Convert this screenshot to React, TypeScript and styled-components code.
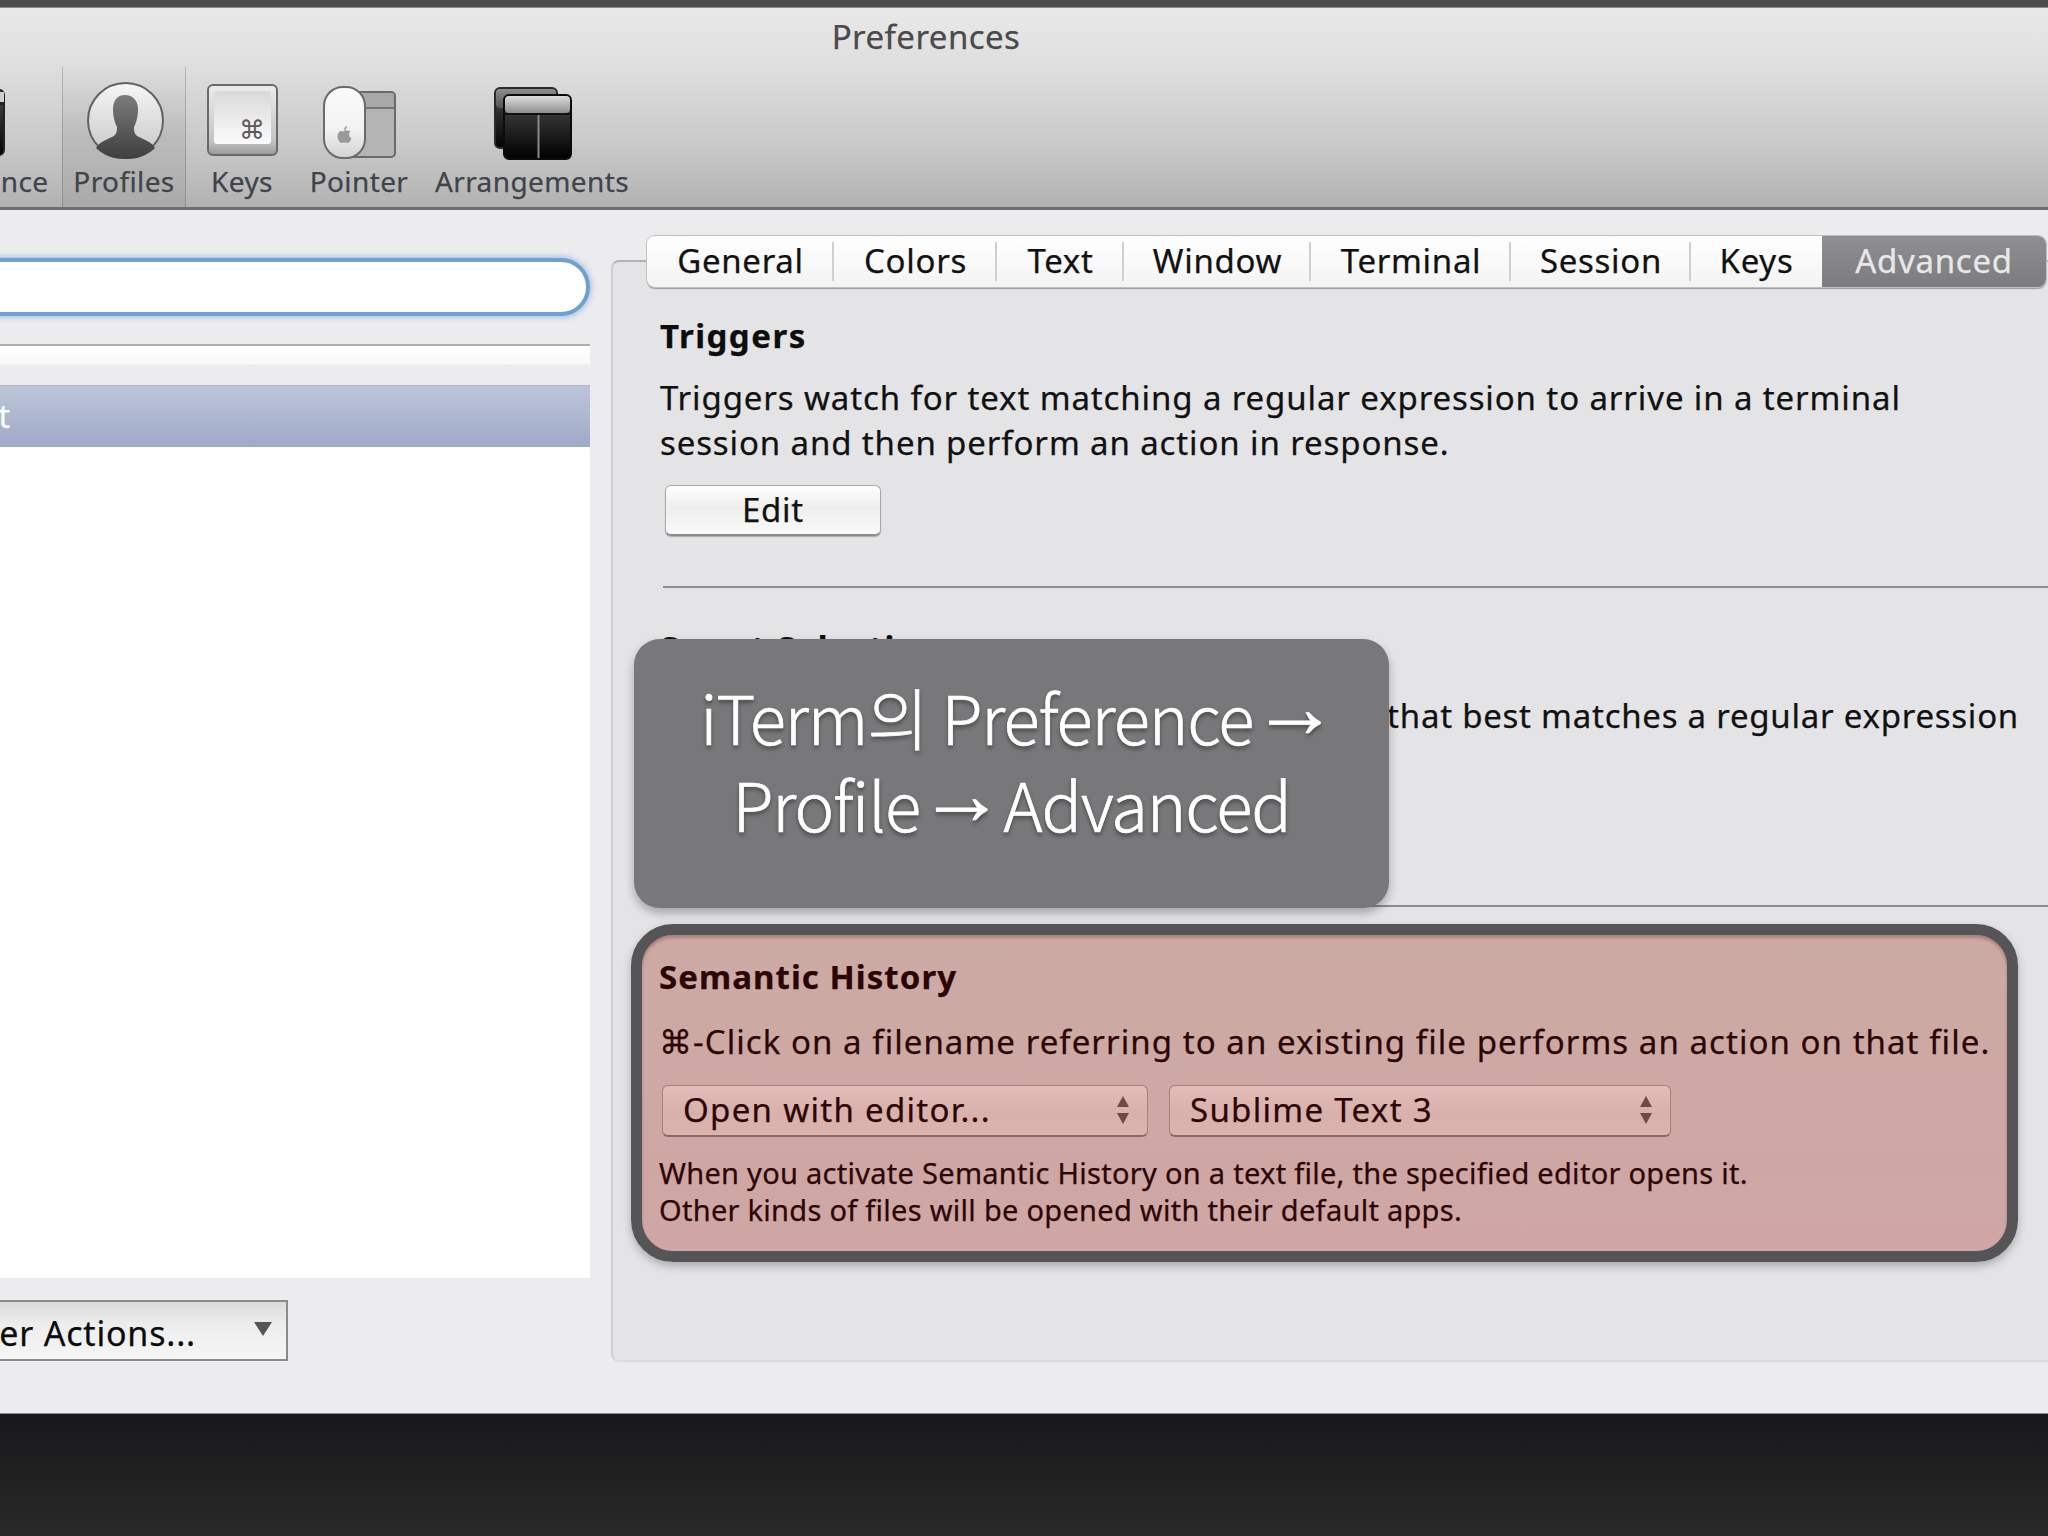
import React from 'react';
import styled, { createGlobalStyle } from 'styled-components';

const UI_FONT = '"Noto Sans", "DejaVu Sans", sans-serif';

const GlobalStyle = createGlobalStyle`
  html, body {
    margin: 0;
    padding: 0;
    background: #1f1f20;
    overflow: hidden;
  }
`;

const Page = styled.div`
  position: relative;
  width: 2048px;
  height: 1536px;
  overflow: hidden;
  display: flex;
  flex-direction: column;
  font-family: ${UI_FONT};
  -webkit-text-stroke: 0.25px currentColor;
`;

const TopStrip = styled.div`
  height: 8px;
  flex: none;
  background: #4c4c4e;
  border-bottom: 1px solid #8a8a8a;
  box-sizing: border-box;
`;

const Toolbar = styled.header`
  height: 202px;
  flex: none;
  box-sizing: border-box;
  border-bottom: 3px solid #6e6e70;
  background: linear-gradient(#e9e9e9, #dedede 30%, #c8c8c8 70%, #b2b2b2);
`;

const Title = styled.div`
  width: 1852px;
  height: 59px;
  line-height: 58px;
  text-align: center;
  font-size: 33px;
  letter-spacing: 0.45px;
  color: #4a4a4c;
`;

const ToolRow = styled.div`
  display: flex;
  height: 140px;
  margin-left: -126px;
`;

const ToolItem = styled.div<{ $w: number; $active?: boolean }>`
  width: ${(p) => p.$w}px;
  flex: none;
  box-sizing: border-box;
  padding-top: 15px;
  display: flex;
  flex-direction: column;
  align-items: center;
  ${(p) =>
    p.$active &&
    `
    background: linear-gradient(rgba(0,0,0,0), rgba(0,0,0,.08) 50%, rgba(0,0,0,.05));
    border-left: 1px solid rgba(90,90,90,.3);
    border-right: 1px solid rgba(90,90,90,.3);
  `}
`;

const ToolIcon = styled.svg`
  width: 80px;
  height: 81px;
  flex: none;
  display: block;
  overflow: visible;
`;

const ToolLabel = styled.div`
  height: 36px;
  line-height: 36px;
  white-space: nowrap;
  font-size: 28px;
  letter-spacing: 0.4px;
  color: #40444a;
`;

const Body = styled.main`
  height: 1204px;
  flex: none;
  display: flex;
  background: #ecebed;
  border-bottom: 1px solid #8c8c8c;
  box-sizing: border-box;
`;

const Sidebar = styled.aside`
  width: 611px;
  flex: none;
  box-sizing: border-box;
  padding: 48px 21px 0 0;
  overflow: hidden;
  display: flex;
  flex-direction: column;
`;

const SearchField = styled.div`
  height: 58px;
  margin-left: -40px;
  flex: none;
  box-sizing: border-box;
  border: 4px solid #6ea0d2;
  border-radius: 29px;
  background: #fff;
  box-shadow: 0 0 5px 2px rgba(120, 170, 220, 0.55);
`;

const TableHead = styled.div`
  height: 41px;
  margin-top: 28px;
  flex: none;
  box-sizing: border-box;
  border-top: 2px solid #b0aeae;
  background: linear-gradient(#fff, #f8f8f9 45%, #ecebed 50%, #ecebed);
`;

const SelectedRow = styled.div`
  height: 62px;
  flex: none;
  line-height: 60px;
  font-size: 32px;
  color: #fff;
  white-space: nowrap;
  overflow: hidden;
  background: linear-gradient(#bcc6da, #9fa8c6);
  border-top: 1px solid #b5b2ba;
  box-sizing: border-box;
`;

const RowName = styled.span`
  display: inline-block;
  margin-left: -100px;
`;

const TableBody = styled.div`
  height: 831px;
  flex: none;
  background: #fff;
`;

const ActionsRow = styled.div`
  margin-top: 22px;
  display: flex;
`;

const ActionsMenu = styled.div`
  width: 288px;
  height: 61px;
  flex: none;
  box-sizing: border-box;
  display: flex;
  align-items: center;
  justify-content: flex-end;
  gap: 58px;
  padding: 4px 14px 0 0;
  border: 2px solid #8a8a8a;
  border-left: none;
  background: linear-gradient(#dcdbdc, #eeedee 40%, #f6f5f6);
  font-size: 34px;
  letter-spacing: 0.8px;
  color: #0c0c0c;
  white-space: nowrap;
`;

const MenuCaret = styled.span`
  width: 0;
  height: 0;
  margin-bottom: 8px;
  border-left: 9px solid transparent;
  border-right: 9px solid transparent;
  border-top: 14px solid #555;
`;

const PanelArea = styled.section`
  flex: 1;
  min-width: 0;
  padding-top: 26px;
`;

const TabBar = styled.nav`
  position: relative;
  z-index: 1;
  margin-left: 36px;
  width: 1399px;
  height: 51px;
  display: flex;
  box-sizing: border-box;
  border-radius: 8px;
  overflow: hidden;
  background: linear-gradient(#fff, #f3f3f4);
  box-shadow: 0 0 0 1px #c0c0c0, 0 2px 1px #9a9a9a;
`;

const Tab = styled.div<{ $w: number; $active?: boolean; $last?: boolean }>`
  width: ${(p) => p.$w}px;
  flex: none;
  box-sizing: border-box;
  padding-bottom: 3px;
  display: flex;
  align-items: center;
  justify-content: center;
  position: relative;
  font-size: 33px;
  letter-spacing: 0.7px;
  color: ${(p) => (p.$active ? '#e8e8ea' : '#111')};
  background: ${(p) => (p.$active ? 'linear-gradient(#8f8e90, #7c7b7d)' : 'transparent')};
  ${(p) =>
    !p.$active &&
    !p.$last &&
    `
    &::after {
      content: '';
      position: absolute;
      right: 0;
      top: 6px;
      bottom: 6px;
      width: 2px;
      background: #cfcfcf;
    }
  `}
`;

const TabBox = styled.div`
  height: 1102px;
  margin-top: -27px;
  box-sizing: border-box;
  padding: 52px 0 0 47px;
  border: 2px solid #dcdbdd;
  border-top-color: #b4b3b5;
  border-left-color: #cfced0;
  border-right: none;
  border-radius: 8px 0 0 8px;
  background: #e4e3e5;
`;

const SectionTitle = styled.h2<{ $tint?: boolean }>`
  margin: 0;
  height: 44px;
  line-height: 44px;
  font-size: 33px;
  font-weight: 700;
  letter-spacing: ${(p) => (p.$tint ? '1.05px' : '1.5px')};
  color: ${(p) => (p.$tint ? '#2c0606' : '#0d0d0d')};
`;

const Paragraph = styled.p`
  margin: 18px 0 0;
  font-size: 33px;
  line-height: 44.5px;
  letter-spacing: 0.88px;
  color: #111;
  white-space: nowrap;
`;

const EditButton = styled.button`
  display: block;
  width: 216px;
  height: 51px;
  margin: 20px 0 0 5px;
  padding: 0 0 1px;
  box-sizing: border-box;
  border: 1px solid #a8a8a8;
  border-bottom: 2px solid #8c8c8c;
  border-radius: 6px;
  background: linear-gradient(#fff, #eeeeef 45%, #fafafa);
  box-shadow: 0 1px 1px rgba(0, 0, 0, 0.25);
  font-family: inherit;
  font-size: 33px;
  letter-spacing: 0.7px;
  color: #111;
`;

const Divider = styled.hr<{ $top: number }>`
  height: 2px;
  margin: ${(p) => p.$top}px 0 0 3px;
  border: none;
  background: #8e8e90;
`;

const SmartTitle = styled(SectionTitle)`
  margin-top: 38px;
`;

const SmartLine = styled.div`
  width: 1359px;
  height: 44px;
  margin-top: 24px;
  display: flex;
  justify-content: flex-end;
  line-height: 44px;
  font-size: 33px;
  letter-spacing: 0.75px;
  color: #111;
  white-space: nowrap;
`;

const SmartSecondLine = styled.div`
  height: 44px;
  line-height: 44px;
  font-size: 33px;
  color: #111;
`;

const Highlight = styled.div`
  width: 1387px;
  height: 338px;
  margin: 17px 0 0 -29px;
  box-sizing: border-box;
  padding: 20px 0 0 17px;
  border: 11px solid #555456;
  border-radius: 42px;
  background: linear-gradient(#ccaaa4, #cfa6a4);
  box-shadow: 0 4px 8px rgba(0, 0, 0, 0.25), inset 0 3px 3px rgba(120, 50, 50, 0.35);
`;

const HighlightLine = styled.p`
  margin: 21px 0 0;
  height: 44px;
  line-height: 44px;
  font-size: 33px;
  letter-spacing: 1.05px;
  color: #2c0606;
  white-space: nowrap;
`;

const SelectRow = styled.div`
  display: flex;
  gap: 21px;
  margin: 21px 0 0 3px;
`;

const Select = styled.div<{ $w: number }>`
  width: ${(p) => p.$w}px;
  height: 52px;
  flex: none;
  box-sizing: border-box;
  padding: 0 17px 2px 20px;
  display: flex;
  align-items: center;
  justify-content: space-between;
  border: 1px solid #a87f7b;
  border-bottom: 2px solid #8f6763;
  border-radius: 6px;
  background: linear-gradient(#e2bdb8, #d8b0ac 55%, #dab3ae);
  font-size: 33px;
  letter-spacing: 1.3px;
  color: #2c0606;
`;

const StepperIcon = styled.svg`
  width: 14px;
  height: 30px;
  flex: none;
`;

const Note = styled.p`
  margin: 18px 0 0;
  font-size: 29px;
  line-height: 36.5px;
  letter-spacing: 0.28px;
  color: #2c0606;
  white-space: nowrap;
`;

const Callout = styled.div`
  position: absolute;
  left: 634px;
  top: 639px;
  width: 755px;
  height: 269px;
  box-sizing: border-box;
  padding-top: 33px;
  border-radius: 26px;
  background: #787779;
  box-shadow: 0 5px 10px rgba(0, 0, 0, 0.28);
  text-align: center;
  font-family: "Noto Sans CJK KR", "Noto Sans", sans-serif;
  font-weight: 300;
  font-size: 67px;
  line-height: 87px;
  letter-spacing: -1.1px;
  color: #fff;
  -webkit-text-stroke: 0.7px #fff;
  text-shadow: 0 3px 4px rgba(0, 0, 0, 0.45);
`;

const CalloutLine = styled.div`
  height: 87px;
  white-space: nowrap;
`;

const Arrow = styled.span`
  display: inline-block;
  font-family: "Liberation Sans", sans-serif;
  font-size: 86px;
  line-height: 0;
  letter-spacing: 0;
  margin: 0 -15px;
  transform: translateY(-8px);
`;

const Desk = styled.footer`
  flex: 1;
  background: linear-gradient(#18181a, #29292a);
`;

function AppearanceIcon() {
  return (
    <ToolIcon viewBox="0 0 80 81">
      <defs>
        <linearGradient id="appBody" x1="0" y1="0" x2="0" y2="1">
          <stop offset="0" stopColor="#4a4a4a" />
          <stop offset="1" stopColor="#050505" />
        </linearGradient>
      </defs>
      <rect x="18" y="8" width="58" height="65" rx="5" fill="url(#appBody)" stroke="#222" strokeWidth="2" />
      <rect x="18" y="10" width="58" height="10" fill="#cfcfcf" />
      <rect x="18" y="20" width="58" height="3" fill="#222" />
    </ToolIcon>
  );
}

function ProfileIcon() {
  return (
    <ToolIcon viewBox="0 0 80 81">
      <defs>
        <linearGradient id="profileDisc" x1="0" y1="0" x2="0" y2="1">
          <stop offset="0" stopColor="#f6f6f6" />
          <stop offset="1" stopColor="#c6c6c6" />
        </linearGradient>
        <linearGradient id="profileBust" x1="0" y1="0" x2="0" y2="1">
          <stop offset="0" stopColor="#7c7c7c" />
          <stop offset="1" stopColor="#3e3e3e" />
        </linearGradient>
      </defs>
      <circle cx="41.5" cy="38.5" r="37.5" fill="url(#profileDisc)" stroke="#626262" strokeWidth="2" />
      <path
        d="M41 13C33 13 29 19 29 27C29 35 31 41 33 45C33 51 32 53 28 55C22 58 15 60 12 66C20 74 30 77 41.5 77C53 77 63 74 71 66C68 60 61 58 55 55C51 53 50 51 50 45C52 41 54 35 54 27C54 19 49 13 41 13Z"
        fill="url(#profileBust)"
      />
    </ToolIcon>
  );
}

function KeyIcon() {
  return (
    <ToolIcon viewBox="0 0 80 81">
      <defs>
        <linearGradient id="keyFace" x1="0" y1="0" x2="0" y2="1">
          <stop offset="0" stopColor="#d9d9d9" />
          <stop offset="1" stopColor="#fbfbfb" />
        </linearGradient>
        <linearGradient id="keyEdge" x1="0" y1="0" x2="0" y2="1">
          <stop offset="0" stopColor="#ececec" />
          <stop offset="0.8" stopColor="#c4c4c4" />
          <stop offset="1" stopColor="#9a9a9a" />
        </linearGradient>
      </defs>
      <rect x="6" y="3" width="69" height="70" rx="5" fill="url(#keyEdge)" stroke="#6a6a6a" strokeWidth="2" />
      <rect x="12" y="9" width="57" height="53" rx="3" fill="url(#keyFace)" />
      <text x="50" y="57" textAnchor="middle" fontFamily="'DejaVu Sans', sans-serif" fontSize="26" fill="#5a5a5a">
        ⌘
      </text>
    </ToolIcon>
  );
}

function PointerIcon() {
  return (
    <ToolIcon viewBox="0 0 80 81">
      <defs>
        <linearGradient id="mouseShell" x1="0" y1="0" x2="0" y2="1">
          <stop offset="0" stopColor="#fafafa" />
          <stop offset="0.6" stopColor="#f2f2f2" />
          <stop offset="1" stopColor="#d2d2d2" />
        </linearGradient>
      </defs>
      <rect x="32" y="10" width="44" height="65" rx="4" fill="#b4b4b4" stroke="#6a6a6a" strokeWidth="2" />
      <rect x="33" y="11" width="42" height="14" rx="3" fill="#a8a8a8" />
      <rect x="33" y="25" width="42" height="2" fill="#767676" />
      <rect x="5" y="5" width="41" height="71" rx="19" fill="url(#mouseShell)" stroke="#6a6a6a" strokeWidth="2" />
      <path
        d="M24 50c1-2 3-2 4-1.500c1 .5 3 .5 4 0c-1 1-2 2-2 4c0 2 1 3 2.500 3.500c-.5 2-2 5-4 5c-1 0-2-.6-3-.6s-2 .6-3 .6c-2 0-4-4-4-7c0-3 2-5 4-5c1 0 1.500.3 1.500 .5zM25 48c0-2 1-3.500 3-4c0 2-1 3.500-3 4z"
        fill="#9a9a9a"
      />
    </ToolIcon>
  );
}

function ArrangementIcon() {
  return (
    <ToolIcon viewBox="0 0 80 81">
      <defs>
        <linearGradient id="arrBody" x1="0" y1="0" x2="0" y2="1">
          <stop offset="0" stopColor="#4c4c4c" />
          <stop offset="1" stopColor="#000" />
        </linearGradient>
        <linearGradient id="arrTitle" x1="0" y1="0" x2="0" y2="1">
          <stop offset="0" stopColor="#dcdcdc" />
          <stop offset="1" stopColor="#8e8e8e" />
        </linearGradient>
        <linearGradient id="arrBackTitle" x1="0" y1="0" x2="0" y2="1">
          <stop offset="0" stopColor="#8e8e8e" />
          <stop offset="1" stopColor="#555" />
        </linearGradient>
      </defs>
      <rect x="3" y="6" width="62" height="60" rx="5" fill="url(#arrBody)" stroke="#2a2a2a" strokeWidth="2" />
      <rect x="4" y="7" width="60" height="19" rx="4" fill="url(#arrBackTitle)" />
      <rect x="12" y="13" width="67" height="64" rx="5" fill="url(#arrBody)" stroke="#0c0c0c" strokeWidth="2" />
      <rect x="13" y="14" width="65" height="17" rx="4" fill="url(#arrTitle)" />
      <rect x="13" y="31" width="65" height="2" fill="#111" />
      <rect x="45.500" y="33" width="2" height="43" fill="#8a8a8a" />
    </ToolIcon>
  );
}

function Stepper() {
  return (
    <StepperIcon viewBox="0 0 14 30">
      <path d="M7 1L13 12H1Z" fill="#6e4a47" />
      <path d="M7 29L1 18H13Z" fill="#6e4a47" />
    </StepperIcon>
  );
}

const tabs = [
  { name: 'General', w: 187 },
  { name: 'Colors', w: 163 },
  { name: 'Text', w: 127 },
  { name: 'Window', w: 187 },
  { name: 'Terminal', w: 200 },
  { name: 'Session', w: 180 },
  { name: 'Keys', w: 131 },
  { name: 'Advanced', w: 224 },
];

export default function App() {
  return (
    <Page>
      <GlobalStyle />
      <TopStrip />
      <Toolbar>
        <Title>Preferences</Title>
        <ToolRow>
          <ToolItem $w={188}>
            <AppearanceIcon />
            <ToolLabel>Appearance</ToolLabel>
          </ToolItem>
          <ToolItem $w={124} $active>
            <ProfileIcon />
            <ToolLabel>Profiles</ToolLabel>
          </ToolItem>
          <ToolItem $w={112}>
            <KeyIcon />
            <ToolLabel>Keys</ToolLabel>
          </ToolItem>
          <ToolItem $w={122}>
            <PointerIcon />
            <ToolLabel>Pointer</ToolLabel>
          </ToolItem>
          <ToolItem $w={224}>
            <ArrangementIcon />
            <ToolLabel>Arrangements</ToolLabel>
          </ToolItem>
        </ToolRow>
      </Toolbar>
      <Body>
        <Sidebar>
          <SearchField />
          <TableHead />
          <SelectedRow>
            <RowName>Default</RowName>
          </SelectedRow>
          <TableBody />
          <ActionsRow>
            <ActionsMenu>
              <span>Other Actions...</span>
              <MenuCaret />
            </ActionsMenu>
          </ActionsRow>
        </Sidebar>
        <PanelArea>
          <TabBar>
            {tabs.map((t, i) => (
              <Tab
                key={t.name}
                $w={t.w}
                $active={t.name === 'Advanced'}
                $last={i === tabs.length - 2}
              >
                {t.name}
              </Tab>
            ))}
          </TabBar>
          <TabBox>
            <SectionTitle>Triggers</SectionTitle>
            <Paragraph>
              Triggers watch for text matching a regular expression to arrive in a terminal
              <br />
              session and then perform an action in response.
            </Paragraph>
            <EditButton>Edit</EditButton>
            <Divider $top={50} />
            <SmartTitle>Smart Selection</SmartTitle>
            <SmartLine>Quad-clicking selects the text that best matches a regular expression</SmartLine>
            <SmartSecondLine>and then performs an action.</SmartSecondLine>
            <EditButton>Edit</EditButton>
            <Divider $top={52} />
            <Highlight>
              <SectionTitle $tint>Semantic History</SectionTitle>
              <HighlightLine>⌘-Click on a filename referring to an existing file performs an action on that file.</HighlightLine>
              <SelectRow>
                <Select $w={486}>
                  Open with editor...
                  <Stepper />
                </Select>
                <Select $w={502}>
                  Sublime Text 3
                  <Stepper />
                </Select>
              </SelectRow>
              <Note>
                When you activate Semantic History on a text file, the specified editor opens it.
                <br />
                Other kinds of files will be opened with their default apps.
              </Note>
            </Highlight>
          </TabBox>
        </PanelArea>
      </Body>
      <Desk />
      <Callout>
        <CalloutLine>
          iTerm의 Preference <Arrow>→</Arrow>
        </CalloutLine>
        <CalloutLine>
          Profile <Arrow>→</Arrow> Advanced
        </CalloutLine>
      </Callout>
    </Page>
  );
}
